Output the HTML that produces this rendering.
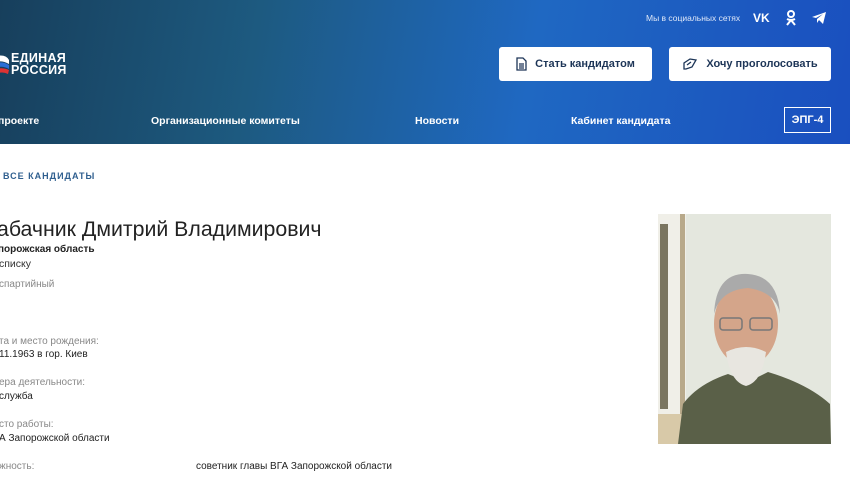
<!DOCTYPE html>
<html><head><meta charset="utf-8"><style>
*{margin:0;padding:0;box-sizing:border-box}
body{width:850px;height:478px;overflow:hidden;background:#fff;font-family:"Liberation Sans","DejaVu Sans",sans-serif;position:relative}
.hdr{position:absolute;left:0;top:0;width:850px;height:144px;background:linear-gradient(100deg,#173f5c 0%,#1d5a80 30%,#1f68c2 62%,#1a4fbf 100%)}
.a{position:absolute;white-space:nowrap}
.nav{color:#fff;font-weight:bold;font-size:10.5px;top:115px}
.btn{position:absolute;top:47px;height:34px;background:#fff;border-radius:3px;color:#1d3557;font-weight:bold;font-size:11px;display:flex;align-items:center;justify-content:center;gap:8px}
.lbl{color:#888;font-size:10px}
.val{color:#222;font-size:10px}
</style></head><body>
<div class="hdr"></div>
<svg class="a" style="left:-6px;top:52px" width="16" height="24" viewBox="0 0 16 24"><path d="M2 4 Q12 2 15 8 L15 12 Q8 8 2 10Z" fill="#fff"/><path d="M2 11 Q9 9 15 13 L15 17 Q8 13 2 16Z" fill="#2a6fd6"/><path d="M2 17 Q9 15 15 18 L14 22 Q8 19 2 22Z" fill="#d33"/></svg>
<div class="a" style="left:11px;top:52px;color:#fff;font-weight:bold;font-size:12.5px;line-height:12px;letter-spacing:0.3px">ЕДИНАЯ<br>РОССИЯ</div>
<div class="a" style="left:646px;top:13px;color:#dfe8f8;font-size:8.5px">Мы в социальных сетях</div>
<div class="a" style="left:753px;top:11px;color:#fff;font-weight:bold;font-size:12px">VK</div>
<svg class="a" style="left:785px;top:10px" width="12" height="16" viewBox="0 0 12 16"><circle cx="6" cy="4" r="3" fill="none" stroke="#fff" stroke-width="2"/><path d="M2 9 Q6 11 10 9 M6 10 L2 15 M6 10 L10 15" stroke="#fff" stroke-width="2" fill="none"/></svg>
<svg class="a" style="left:812px;top:12px" width="14" height="12" viewBox="0 0 14 12"><path d="M0 5 L14 0 L11 12 L7 8 L5 11 L5 7 L11 2 L4 6Z" fill="#fff"/></svg>
<div class="btn" style="left:499px;width:153px"><svg width="11" height="14" viewBox="0 0 11 14"><path d="M1 1h6l3 3v9H1z M3 7h5 M3 9h5 M3 11h5" stroke="#1d3557" stroke-width="1.3" fill="none"/></svg>Стать кандидатом</div>
<div class="btn" style="left:669px;width:162px"><svg width="16" height="14" viewBox="0 0 16 14"><path d="M2 12 L2 6 L8 2 L14 3 L10 10 L4 12Z M5 8 L9 5" stroke="#1d3557" stroke-width="1.3" fill="none"/></svg>Хочу проголосовать</div>
<div class="a nav" style="left:-2px">проекте</div>
<div class="a nav" style="left:151px">Организационные комитеты</div>
<div class="a nav" style="left:415px">Новости</div>
<div class="a nav" style="left:571px">Кабинет кандидата</div>
<div class="a" style="left:784px;top:107px;width:47px;height:26px;border:1px solid #fff;color:#fff;font-weight:bold;font-size:11px;text-align:center;line-height:24px">ЭПГ-4</div>
<div class="a" style="left:3px;top:171px;color:#2f5f8f;font-weight:bold;font-size:9px;letter-spacing:1px">ВСЕ КАНДИДАТЫ</div>
<div class="a" style="left:-3px;top:217px;color:#222;font-size:21.3px">абачник Дмитрий Владимирович</div>
<div class="a" style="left:-2px;top:244px;color:#222;font-weight:bold;font-size:10px">порожская область</div>
<div class="a" style="left:-1px;top:258px;color:#333;font-size:10.5px">списку</div>
<div class="a lbl" style="left:-1px;top:279px">спартийный</div>
<div class="a lbl" style="left:-1px;top:336px">та и место рождения:</div>
<div class="a val" style="left:-1px;top:349px">11.1963 в гор. Киев</div>
<div class="a lbl" style="left:-1px;top:377px">ера деятельности:</div>
<div class="a val" style="left:-1px;top:391px">служба</div>
<div class="a lbl" style="left:-1px;top:419px">сто работы:</div>
<div class="a val" style="left:-1px;top:433px">А Запорожской области</div>
<div class="a lbl" style="left:-1px;top:461px">жность:</div>
<div class="a val" style="left:196px;top:461px">советник главы ВГА Запорожской области</div>
<svg class="a" style="left:658px;top:214px" width="173" height="230" viewBox="0 0 173 230">
<rect width="173" height="230" fill="#e4e7de"/>
<rect x="0" y="0" width="28" height="230" fill="#f0efe8"/>
<rect x="2" y="10" width="8" height="185" fill="#7a7560"/>
<rect x="22" y="0" width="5" height="230" fill="#b8a98a"/>
<rect x="0" y="200" width="30" height="30" fill="#d8c9a8"/>
<path d="M20 230 L25 190 Q40 170 70 160 L90 168 L110 158 Q150 170 172 190 L173 230Z" fill="#5a6048"/>
<ellipse cx="88" cy="110" rx="32" ry="42" fill="#d4a58a"/>
<path d="M56 100 Q58 58 90 60 Q120 62 122 100 Q118 78 90 74 Q62 76 56 100Z" fill="#aaa"/>
<path d="M68 138 Q88 128 108 138 Q104 168 88 172 Q72 168 68 138Z" fill="#e8e6e0"/>
<rect x="62" y="104" width="22" height="12" rx="3" fill="none" stroke="#777" stroke-width="1.5"/>
<rect x="92" y="104" width="22" height="12" rx="3" fill="none" stroke="#777" stroke-width="1.5"/>
</svg>
</body></html>
